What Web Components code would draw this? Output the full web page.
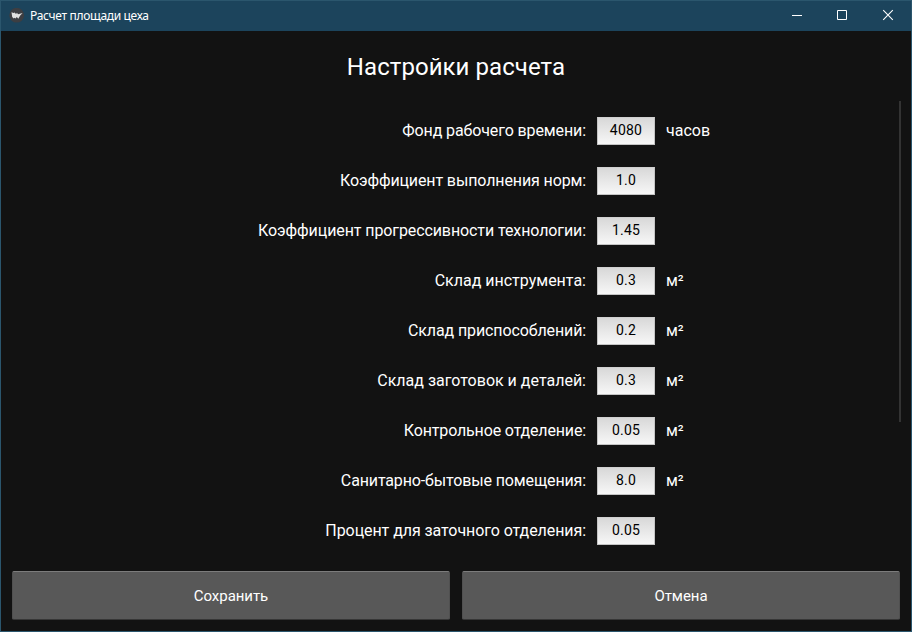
<!DOCTYPE html>
<html lang="ru">
<head>
<meta charset="utf-8">
<title>Расчет площади цеха</title>
<style>
html, body { margin: 0; height: 100%; background: #121212; overflow: hidden; }
</style>
</head>
<body>
<app-window caption="Расчет площади цеха">
  <settings-form heading="Настройки расчета">
    <setting-row label="Фонд рабочего времени:" value="4080" unit="часов" style="--track:-.11px"></setting-row>
    <setting-row label="Коэффициент выполнения норм:" value="1.0" style="--track:-.12px"></setting-row>
    <setting-row label="Коэффициент прогрессивности технологии:" value="1.45" style="--track:-.1px"></setting-row>
    <setting-row label="Склад инструмента:" value="0.3" unit="м²"></setting-row>
    <setting-row label="Склад приспособлений:" value="0.2" unit="м²" style="--track:-.12px"></setting-row>
    <setting-row label="Склад заготовок и деталей:" value="0.3" unit="м²"></setting-row>
    <setting-row label="Контрольное отделение:" value="0.05" unit="м²" style="--track:-.15px"></setting-row>
    <setting-row label="Санитарно-бытовые помещения:" value="8.0" unit="м²" style="--track:-.14px"></setting-row>
    <setting-row label="Процент для заточного отделения:" value="0.05" style="--track:-.07px"></setting-row>
    <push-button slot="actions">Сохранить</push-button>
    <push-button slot="actions">Отмена</push-button>
  </settings-form>
</app-window>
<script>
class BaseElement extends HTMLElement {
  render(html) { this.attachShadow({ mode: 'open' }).innerHTML = html; }
  attr(name) { return this.getAttribute(name) || ''; }
}

customElements.define('app-window', class extends BaseElement {
  connectedCallback() {
    this.render(`
<style>
:host { display: flex; flex-direction: column; box-sizing: border-box; width: 912px; height: 632px;
  border: 1px solid #2b566d; background: #121212; color: #fff; font-family: Roboto, sans-serif; }
header { display: flex; align-items: center; height: 30px; flex: none; background: #1c445c; }
.logo { margin-left: 8px; }
h1 { margin: 0 auto 0 5px; font: 400 12px/16px "Noto Sans", "Open Sans", sans-serif; letter-spacing: -0.33px; }
.ctl { width: 46px; height: 30px; flex: none; }
main { flex: 1; min-height: 0; display: flex; }
svg { display: block; }
</style>
<header>
  <svg class="logo" width="16" height="16" viewBox="0 0 16 16"><circle cx="7.700" cy="7.200" r="7.400" fill="#3d3e42"/><path d="M2.500 4.300 4.600 5 5.600 4.400 7 6 8 4.800 9 6.200 13.600 5 11.200 7.500 9.300 10.800 7.800 9 6.500 10.400 5.200 9.700 4.700 10.400 3.200 9Z" fill="#e0e0e0"/></svg>
  <h1>${this.attr('caption')}</h1>
  <svg class="ctl" viewBox="0 0 46 30"><path d="M19 14.500h10" stroke="#fff"/></svg>
  <svg class="ctl" viewBox="0 0 46 30"><path d="M18.500 9.500h9v9h-9z" fill="none" stroke="#fff"/></svg>
  <svg class="ctl" viewBox="0 0 46 30"><path d="M18.200 9.200 27.800 18.800M27.800 9.200 18.200 18.800" fill="none" stroke="#fff" stroke-width="1.1"/></svg>
</header>
<main><slot></slot></main>`);
  }
});

customElements.define('settings-form', class extends BaseElement {
  connectedCallback() {
    this.render(`
<style>
:host { display: flex; flex-direction: column; flex: 1; min-width: 0; }
h2 { margin: 22px 0 0; height: 28px; font-weight: 400; font-size: 24px; line-height: 28px; text-align: center; letter-spacing: .06px; }
.scroll { display: flex; margin-top: 20px; height: 460px; padding-right: 10px; }
.rows { flex: 1; padding-top: 5px; }
.bar { width: 2px; height: 321px; background: #333; }
footer { display: flex; gap: 12px; padding: 10px 11px 0; }
</style>
<h2>${this.attr('heading')}</h2>
<div class="scroll"><div class="rows"><slot></slot></div><div class="bar"></div></div>
<footer><slot name="actions"></slot></footer>`);
  }
});

customElements.define('setting-row', class extends BaseElement {
  connectedCallback() {
    this.render(`
<style>
:host { display: grid; grid-template-columns: 585px 58px 1fr; column-gap: 11px; align-items: center; height: 50px; font-size: 16px; line-height: 20px; }
.label { text-align: right; white-space: nowrap; letter-spacing: var(--track, 0); }
.field { box-sizing: border-box; height: 28px; border: 1px solid #c4c4c4; border-top-color: #d0d0d0;
  background: linear-gradient(#d8d8d8, #f7f7f7); color: #000; font-size: 14px; line-height: 25px; text-align: center; letter-spacing: .2px; }
</style>
<span class="label">${this.attr('label')}</span>
<div class="field">${this.attr('value')}</div>
<span class="unit">${this.attr('unit')}</span>`);
  }
});

customElements.define('push-button', class extends BaseElement {
  connectedCallback() {
    this.render(`
<style>
:host { display: block; flex: 1; }
button { display: block; box-sizing: border-box; width: 100%; height: 49px; margin: 0; padding: 0;
  border: 1px solid #505050; border-top-color: #7c7c7c; border-bottom-color: #363636; border-radius: 2px;
  background: #585858; color: #fff; font: 400 15px/20px Roboto, sans-serif; letter-spacing: -.05px; }
</style>
<button><slot></slot></button>`);
  }
});
</script>
</body>
</html>
